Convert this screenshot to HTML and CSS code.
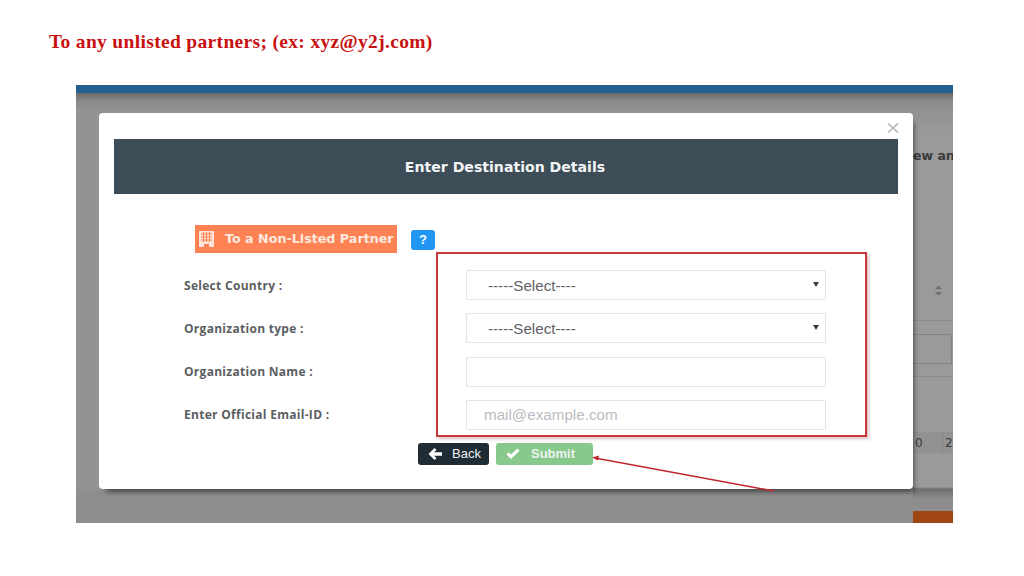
FILE: index.html
```html
<!DOCTYPE html>
<html lang="en">
<head>
<meta charset="utf-8">
<title>Enter Destination Details</title>
<link rel="stylesheet" href="styles.css">
</head>
<body>
<h1 class="slide-title">To any unlisted partners; (ex: xyz@y2j.com)</h1>
<main class="stage">
  <div class="topbar"></div>
  <div class="page-strip">
    <div class="strip-heading"><span>ew an</span></div>
    <div class="strip-sort">
      <svg width="9" height="11" viewBox="0 0 9 11"><path d="M4.500 0.500 8 4H1zM4.500 10.500 1 7h7z" fill="#6f6f6f"/></svg>
    </div>
    <div class="strip-cell"></div>
    <div class="strip-pages"><span class="page-no">0</span><span class="page-no">2</span></div>
    <div class="strip-action"></div>
  </div>

  <section class="modal">
    <svg class="close" width="12" height="10" viewBox="0 0 12 10"><path d="M1 .5 11 9.500M11 .5 1 9.500" stroke="#b4b7b9" stroke-width="1.600" fill="none"/></svg>
    <header class="modal-head"><h2>Enter Destination Details</h2></header>
    <div class="tag-row">
      <span class="tag">
        <svg width="15" height="16" viewBox="0 0 15 16"><path fill="#ffe4d8" d="M0 0h15v16H10v-3H5v3H0z"/><path stroke="#ff8255" stroke-width="1" d="M2 3h11M2 6h11M2 9h11M4.500 1v10M7.500 1v10M10.500 1v10" fill="none"/></svg>
        To a Non-Listed Partner
      </span>
      <span class="help">?</span>
    </div>
    <form class="fields">
      <label class="field-label">Select Country :</label>
      <div class="select-wrap"><select class="control"><option>-----Select----</option></select></div>
      <label class="field-label">Organization type :</label>
      <div class="select-wrap"><select class="control"><option>-----Select----</option></select></div>
      <label class="field-label">Organization Name :</label>
      <input class="control plain" type="text">
      <label class="field-label">Enter Official Email-ID :</label>
      <input class="control plain" type="text" placeholder="mail@example.com">
    </form>
    <div class="actions">
      <button class="btn back" type="button">
        <svg width="14" height="12" viewBox="0 0 14 12"><path fill="#fff" d="M6.500 0 8.500 2 6 4.300H14V7.700H6L8.500 10 6.500 12 .5 6z"/></svg>
        Back
      </button>
      <button class="btn submit" type="button">
        <svg width="14" height="11" viewBox="0 0 14 11"><path fill="#fff" d="M5 11 .5 6.500 2.700 4.300 5 6.600 11.300.5 13.500 2.700z"/></svg>
        Submit
      </button>
    </div>
  </section>

  <div class="highlight"></div>
  <svg class="arrow" width="190" height="60" viewBox="0 0 190 60">
    <path d="M3 21 182 54" stroke="#c0272d" stroke-width="1.500" fill="none"/>
    <path d="M0 20.500 7 18.500 6 23.500z" fill="#c0272d"/>
  </svg>
</main>
</body>
</html>
```
FILE: styles.css
```css
* { box-sizing: border-box; }
html, body { margin: 0; height: 576px; overflow: hidden; background: #fff; }
body { padding: 31px 0 0 49px; }

.slide-title {
  margin: 0;
  height: 54px;
  font: bold 19.500px/22px "Liberation Serif", serif;
  letter-spacing: .33px;
  color: #c8100f;
}

.stage {
  position: relative;
  width: 877px;
  height: 438px;
  margin-left: 27px;
  overflow: hidden;
  background: linear-gradient(#6a6a6a 8px, #8a8a8b 16px, #939394 26px, #939394 404px, #8e8e8e 405px);
}
.topbar { height: 8px; background: #24608f; }

.page-strip {
  position: absolute;
  top: 8px; right: 0; bottom: 0;
  width: 40px;
  display: flex;
  flex-direction: column;
  background: linear-gradient(#0000 25px, #9a9a9a 40px, #9a9a9a 394px, #6f6f6f 396px, #8e8e8e 406px);
  color: #3a3a3a;
}
.strip-heading {
  margin-top: 54px;
  height: 18px;
  width: 40px;
  overflow: hidden;
  font: bold 12.500px/18px "DejaVu Sans", sans-serif;
  white-space: nowrap;
}
.strip-sort {
  display: flex; justify-content: center;
  width: 50px; height: 36px; padding: 0 0 0 1px;
  margin-top: 120px;
  border-bottom: 1px solid #8a8a8a;
}
.strip-cell { margin-top: 13px; height: 30px; border: 1px solid #848484; border-left: 0; width: 39px; }
.strip-pages { margin-top: 12px; padding-top: 55px; display: flex; height: 77px; border-top: 1px solid #8a8a8a; }
.page-no { width: 30px; background: #929292; border-right: 1px solid #868686; padding-left: 2px; font: 12px/22px "DejaVu Sans", sans-serif; flex: none; }
.strip-action { margin-top: 58px; height: 12px; background: #a24515; }

.modal {
  position: absolute;
  left: 23px; top: 28px;
  width: 814px;
  height: 376px;
  padding: 26px 15px 0;
  background: #fff;
  border-radius: 4px;
  box-shadow: 4px 6px 5px -3px rgba(0,0,0,.5);
}
.close { position: absolute; top: 10px; right: 14px; }
.modal-head {
  height: 55px;
  display: flex;
  align-items: center;
  justify-content: center;
  background: #3d4d57;
}
.modal-head h2 {
  margin: 0 0 0 -2px;
  font: bold 14.100px/18px "DejaVu Sans", sans-serif;
  color: #f3f5f6;
}

.tag-row { display: flex; align-items: flex-start; margin: 31px 0 0 81px; height: 28px; }
.tag {
  display: flex; align-items: center; gap: 11px;
  width: 202px; height: 28px; padding-left: 4px;
  background: #ff8255; color: #fde9df;
  font: bold 12.700px/28px "DejaVu Sans", sans-serif;
  white-space: nowrap;
}
.help {
  margin: 5px 0 0 14px;
  width: 24px; height: 20px;
  border-radius: 3px;
  background: #2196f3; color: #fff;
  font: bold 13px/20px "Liberation Sans", sans-serif;
  text-align: center;
}

.fields {
  display: grid;
  grid-template-columns: 282px 360px;
  grid-auto-rows: 30px;
  row-gap: 13.300px;
  margin: 17px 0 0 70px;
  align-items: center;
}
.field-label {
  font: bold 12px/16px "Open Sans", sans-serif;
  letter-spacing: .29px;
  color: #5b5e61;
  margin-top: 1px;
}
.select-wrap { position: relative; height: 30px; }
.select-wrap::after {
  content: "";
  position: absolute; right: 7px; top: 12px;
  border: 3.500px solid transparent;
  border-top: 5.500px solid #333a40;
  border-bottom: 0;
}
.control {
  display: block;
  width: 360px; height: 30px;
  border: 1px solid #e1e4e6;
  border-radius: 1px;
  background: #fff;
  appearance: none;
  font: 15.200px "Liberation Sans", sans-serif;
  color: #5e6266;
  padding: 0 21px;
}
.plain { padding: 0 17px; }
.plain::placeholder { color: #b9bcc2; opacity: 1; }

.actions { display: flex; gap: 7px; margin: 13px 0 0 304px; }
.btn {
  display: flex; align-items: center;
  height: 22px; padding: 0;
  border: 0; border-radius: 3px;
  font: bold 13px/22px "Liberation Sans", sans-serif;
  color: #eef1f2;
}
.back { width: 71px; background: #1f2c35; gap: 10px; padding-left: 10px; font-weight: normal; }
.submit { width: 97px; background: #86c98a; gap: 11px; padding-left: 10px; }

.highlight {
  position: absolute;
  left: 360px; top: 167px;
  width: 431px; height: 185px;
  border: 2px solid #c4393c;
  box-shadow: 2px 2px 3px rgba(120,0,0,.25);
}
.arrow { position: absolute; left: 516px; top: 352px; }
```
